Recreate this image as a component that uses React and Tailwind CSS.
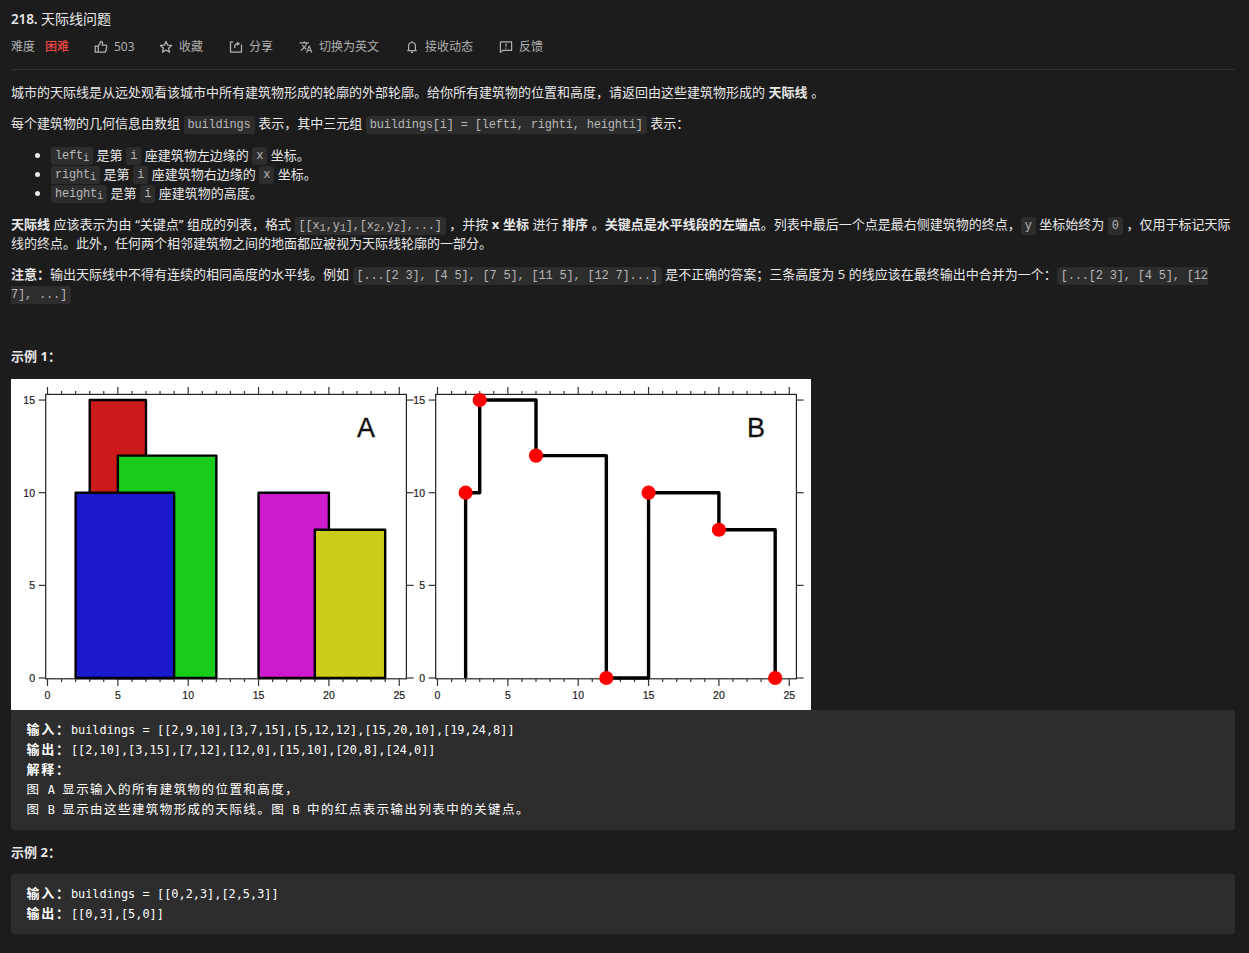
import { MdTranslate } from "react-icons/md";

const Code = ({ children, className = "" }) => (
  <code className={`relative top-[-0.5px] rounded-[3px] bg-[#2d2d2d] px-1 py-[2px] font-['Liberation_Mono','Noto_Sans_CJK_SC',monospace] text-[12px] tracking-[-0.2px] text-[#b8b8b8] [word-spacing:0px] ${className}`}>
    {children}
  </code>
);

const Sub = ({ children }) => (
  <sub className="relative bottom-[-2px] align-baseline text-[10.5px] leading-none tracking-[-0.3px]">{children}</sub>
);

const Icon = ({ children, w = 1.2 }) => (
  <svg viewBox="0 0 14 14" className="h-[14px] w-[14px]" fill="none" stroke="currentColor" strokeWidth={w} strokeLinejoin="round">
    {children}
  </svg>
);
const ThumbIcon = () => (
  <Icon w={1.3}>
    <path d="M1.2 6.2h3v6h-3zM4.2 6.4l2.6-4.9c1.2 0 1.9.8 1.7 1.9L8.1 5.2h3.6c.8 0 1.3.6 1.1 1.4l-1 4.4c-.2.8-.7 1.2-1.4 1.2H4.2" />
  </Icon>
);
const StarIcon = () => (
  <Icon w={1.3}>
    <path d="M7 1.4l1.6 3.7 4 .4-3 2.7.9 3.9L7 10l-3.5 2.1.9-3.9-3-2.7 4-.4z" />
  </Icon>
);
const ShareIcon = () => (
  <Icon w={1.3}>
    <path d="M4.2 1.8H1.5v10.4h11V4.4" />
    <path d="M5.8 8.2V6.6c0-1.8.9-2.8 2.6-2.9" />
    <path d="M8 1.4l3.2 2.3L8 6z" fill="currentColor" stroke="none" />
  </Icon>
);
const BellIcon = () => (
  <Icon>
    <path d="M2.2 10.6h9.6M3.6 10.4V6c0-2.1 1.4-3.5 3.4-3.5S10.4 3.9 10.4 6v4.4M7 1.1v1.4M5.9 12.4h2.2" />
  </Icon>
);
const FeedbackIcon = () => (
  <Icon>
    <path d="M1.4 1.8h11.2v8.6H3.6l-2.2 2zM7 3.6v3M7 7.6v1.2" />
  </Icon>
);

const Action = ({ icon, label, className }) => (
  <div className={`flex items-center ${className}`}>
    {icon}
    <span>{label}</span>
  </div>
);

const U = 14.07;
const V = 18.53;
const X0 = 36.5;
const Y0 = 299;
const px = (x) => X0 + x * U;
const py = (y) => Y0 - y * V;

const BUILDINGS = [
  [3, 7, 15, "#cc1a1a"],
  [5, 12, 12, "#1acc1a"],
  [2, 9, 10, "#1a1acc"],
  [15, 20, 10, "#cc1acc"],
  [19, 24, 8, "#cccc1a"],
];
const POINTS = [[2, 10], [3, 15], [7, 12], [12, 0], [15, 10], [20, 8], [24, 0]];
const SKYLINE = [[2, 0], [2, 10], [3, 10], [3, 15], [7, 15], [7, 12], [12, 12], [12, 0], [15, 0], [15, 10], [20, 10], [20, 8], [24, 8], [24, 0]];

const Axes = ({ letter }) => (
  <g>
    <rect x="34.7" y="15.4" width="360.7" height="284.4" fill="none" stroke="#222" strokeWidth="1.2" />
    {Array.from({ length: 26 }, (_, i) => {
      const major = i % 5 === 0;
      return (
        <g key={i} stroke="#333" strokeWidth="1.2">
          <line x1={px(i)} x2={px(i)} y1={major ? 8 : 12} y2="15.4" />
          <line x1={px(i)} x2={px(i)} y1="299.8" y2={major ? 307 : 303} />
          {major && (
            <text x={px(i)} y="320.4" textAnchor="middle" fontSize="10.5" fill="#222" stroke="#222" strokeWidth="0.2">{i}</text>
          )}
        </g>
      );
    })}
    {[0, 5, 10, 15].map((v) => (
      <g key={v} stroke="#333" strokeWidth="1.2">
        <line x1="27.7" x2="34.7" y1={py(v)} y2={py(v)} />
        <line x1="395.4" x2="402.6" y1={py(v)} y2={py(v)} />
        <text x="24" y={py(v) + 3.8} textAnchor="end" fontSize="10.5" fill="#222" stroke="#222" strokeWidth="0.2">{v}</text>
      </g>
    ))}
    <text x="355" y="58" textAnchor="middle" fontSize="27" fill="#111" stroke="#111" strokeWidth="0.3">{letter}</text>
  </g>
);

const Chart = () => (
  <svg width="800" height="331" viewBox="0 0 800 331" className="block bg-white font-['Liberation_Sans',sans-serif]">
    <Axes letter="A" />
    {BUILDINGS.map(([l, r, h, c]) => (
      <rect key={c} x={px(l)} y={py(h)} width={(r - l) * U} height={h * V} fill={c} stroke="#000" strokeWidth="2.4" strokeLinejoin="round" />
    ))}
    <g transform="translate(390 0)">
      <Axes letter="B" />
      <polyline points={SKYLINE.map(([x, y]) => `${px(x)},${py(y)}`).join(" ")} fill="none" stroke="#000" strokeWidth="3.4" strokeLinejoin="round" />
      {POINTS.map(([x, y]) => (
        <circle key={x} cx={px(x)} cy={py(y)} r="7.1" fill="#f00" />
      ))}
    </g>
  </svg>
);

const Pre = ({ children }) => (
  <pre className="rounded-[3px] bg-[#2d2d2d] px-[15.5px] py-[10px] font-['DejaVu_Sans_Mono','Noto_Sans_CJK_SC',monospace] text-[11.88px] leading-5 text-white">
    {children}
  </pre>
);
const Row = ({ children }) => <div className="h-5 whitespace-pre">{children}</div>;
const Key = ({ children }) => (
  <b className="font-['Noto_Sans_CJK_SC',sans-serif] text-[13px] leading-none tracking-[1.8px]">{children}</b>
);
const Zh = ({ children }) => (
  <span className="font-['Noto_Sans_CJK_SC',sans-serif] text-[12.5px] leading-none tracking-[1.43px]">{children}</span>
);

export default function App() {
  return (
    <div className="h-[953px] w-[1249px] overflow-hidden bg-[#1c1c1c] pl-[11px] pr-[14px] font-['Noto_Sans','Noto_Sans_CJK_SC',sans-serif] text-[13px] leading-[19px] text-[#e8e8e8] [word-spacing:0.18px]">
      <header className="h-[70px] border-b border-[#303030] pt-[9px]">
        <h1 className="h-5 whitespace-nowrap text-[14px] leading-5">
          <span className="text-[13.5px] font-semibold tracking-[-0.1px]">218. </span>
          <span className="font-normal">天际线问题</span>
        </h1>
        <div className="mt-2 flex h-5 items-center whitespace-nowrap text-[12px] leading-5 text-[#b0b0b0]">
          <span className="w-[34px]">难度</span>
          <span className="w-[49px] font-medium text-[#ef4743]">困难</span>
          <Action className="w-[65px] gap-[6px]" icon={<ThumbIcon />} label="503" />
          <Action className="w-[70px] gap-[6px]" icon={<StarIcon />} label="收藏" />
          <Action className="w-[70px] gap-[6px]" icon={<ShareIcon />} label="分享" />
          <Action className="w-[106px] gap-[6px]" icon={<MdTranslate size={14} />} label="切换为英文" />
          <Action className="w-[94px] gap-[6px]" icon={<BellIcon />} label="接收动态" />
          <Action className="gap-[6px]" icon={<FeedbackIcon />} label="反馈" />
        </div>
      </header>

      <main className="pt-[12.5px]">
        <p className="mb-[12.5px] h-[19px] whitespace-nowrap">
          城市的天际线是从远处观看该城市中所有建筑物形成的轮廓的外部轮廓。给你所有建筑物的位置和高度，请返回由这些建筑物形成的 <b>天际线</b> 。
        </p>
        <p className="mb-[12.5px] h-[19px] whitespace-nowrap">
          每个建筑物的几何信息由数组 <Code>buildings</Code> 表示，其中三元组 <Code>buildings[i] = [lefti, righti, heighti]</Code> 表示：
        </p>
        <ul className="mb-[12.5px] list-disc whitespace-nowrap pl-10">
          <li className="h-[19px]"><Code>left<Sub>i</Sub></Code> 是第 <Code>i</Code> 座建筑物左边缘的 <Code>x</Code> 坐标。</li>
          <li className="h-[19px]"><Code>right<Sub>i</Sub></Code> 是第 <Code>i</Code> 座建筑物右边缘的 <Code>x</Code> 坐标。</li>
          <li className="h-[19px]"><Code>height<Sub>i</Sub></Code> 是第 <Code>i</Code> 座建筑物的高度。</li>
        </ul>
        <div className="mb-[12px] whitespace-nowrap">
          <p className="h-[19px]">
            <b>天际线</b> 应该表示为由 “关键点” 组成的列表，格式 <Code>[[x<Sub>1</Sub>,y<Sub>1</Sub>],[x<Sub>2</Sub>,y<Sub>2</Sub>],...]</Code> ，并按 <b>x 坐标</b> 进行 <b>排序</b> 。<b>关键点是水平线段的左端点</b>。列表中最后一个点是最右侧建筑物的终点，<Code>y</Code> 坐标始终为 <Code>0</Code> ，仅用于标记天际
          </p>
          <p className="h-[19px]">线的终点。此外，任何两个相邻建筑物之间的地面都应被视为天际线轮廓的一部分。</p>
        </div>
        <div className="whitespace-nowrap">
          <p className="h-[19px]">
            <b>注意：</b>输出天际线中不得有连续的相同高度的水平线。例如 <Code>[...[2 3], [4 5], [7 5], [11 5], [12 7]...]</Code> 是不正确的答案；三条高度为 5 的线应该在最终输出中合并为一个：<Code className="rounded-r-none pr-0">[...[2 3], [4 5], [12</Code>
          </p>
          <p className="h-[19px]"><Code className="rounded-l-none pl-0">7], ...]</Code></p>
        </div>
        <p className="mt-[44px] h-[19px] whitespace-nowrap font-bold">示例 1：</p>
        <div className="mt-[12.5px]">
          <Chart />
        </div>
        <Pre>
          <Row><Key>输入：</Key>buildings = [[2,9,10],[3,7,15],[5,12,12],[15,20,10],[19,24,8]]</Row>
          <Row><Key>输出：</Key>[[2,10],[3,15],[7,12],[12,0],[15,10],[20,8],[24,0]]</Row>
          <Row><Key>解释：</Key></Row>
          <Row><Zh>图</Zh> A <Zh>显示输入的所有建筑物的位置和高度，</Zh></Row>
          <Row><Zh>图</Zh> B <Zh>显示由这些建筑物形成的天际线。图</Zh> B <Zh>中的红点表示输出列表中的关键点。</Zh></Row>
        </Pre>
        <p className="mb-[12px] mt-[13px] h-[19px] whitespace-nowrap font-bold">示例 2：</p>
        <Pre>
          <Row><Key>输入：</Key>buildings = [[0,2,3],[2,5,3]]</Row>
          <Row><Key>输出：</Key>[[0,3],[5,0]]</Row>
        </Pre>
      </main>
    </div>
  );
}
